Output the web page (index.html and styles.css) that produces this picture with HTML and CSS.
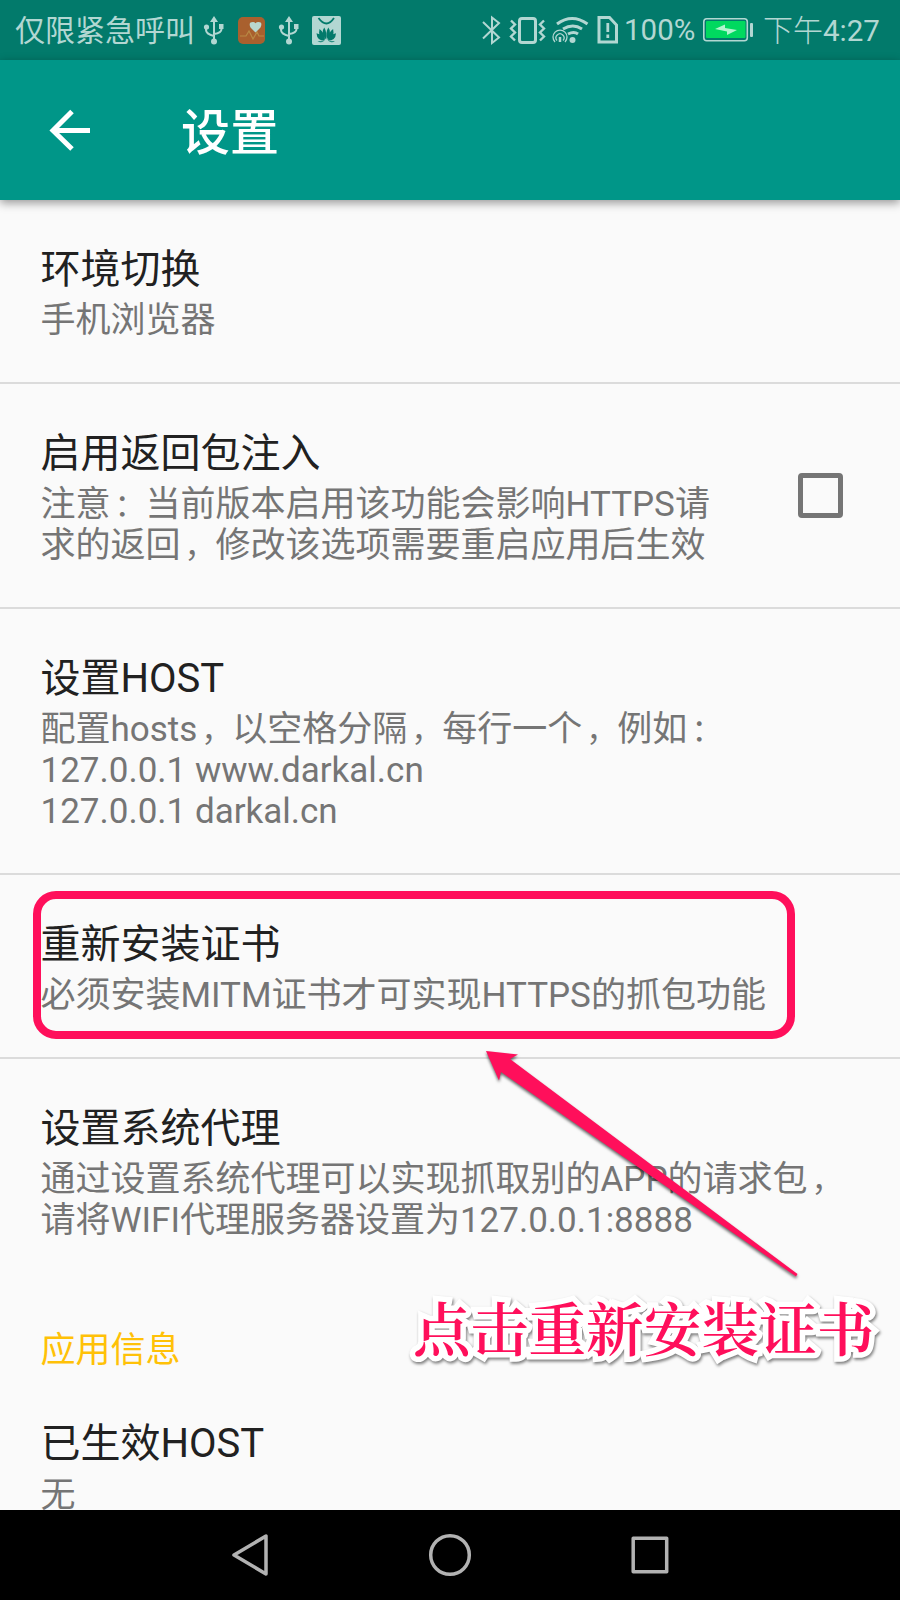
FILE: index.html
```html
<!DOCTYPE html>
<html lang="zh-CN">
<head>
<meta charset="utf-8">
<title>设置</title>
<link rel="stylesheet" href="styles.css">
</head>
<body>
<div class="screen">
  <header class="status">
    <span class="carrier">仅限紧急呼叫</span>
    <svg class="status-left" width="140" height="32" viewBox="202 14 140 32">
      <g class="usb">
        <path d="M214 20V40M206 27v3q0 4 8 6M221.500 27v2q0 4-7.500 5" fill="none" stroke="#b2d7d2" stroke-width="2"/>
        <path d="M210 22l4-6 4 6zM219 24h4.500v5h-4.500z"/><circle cx="206.500" cy="27" r="2.600"/><circle cx="214" cy="41.500" r="3"/>
      </g>
      <rect x="238" y="17" width="27" height="27" rx="5" fill="#a9602e"/>
      <path d="M240 36h6l3-5 4 8 4-7 2 4h5" fill="none" stroke="#b98a45" stroke-width="1.200"/>
      <path d="M255.500 32.500l-5-5q-2.500-5.500 2.500-5.500 1.500 0 2.500 1.200 1-1.200 3-1.200 4.500 0 2 5.500z" fill="#b9d8cf"/>
      <g class="usb" transform="translate(75 0)">
        <path d="M214 20V40M206 27v3q0 4 8 6M221.500 27v2q0 4-7.500 5" fill="none" stroke="#b2d7d2" stroke-width="2"/>
        <path d="M210 22l4-6 4 6zM219 24h4.500v5h-4.500z"/><circle cx="206.500" cy="27" r="2.600"/><circle cx="214" cy="41.500" r="3"/>
      </g>
      <rect x="312" y="16" width="29" height="29" rx="2" fill="#b2d7d2"/>
      <path d="M318.500 18q8 11 15.500 0" fill="none" stroke="#027a6b" stroke-width="1.800"/>
      <g fill="#027a6b">
        <path d="M325.800 39.500q-5.500-7-1.500-12 3 5 1.500 12z"/>
        <path d="M326.800 39.500q5.500-7 1.500-12-3 5-1.500 12z"/>
        <path d="M325 40q-7.500-3-5.500-11 5.500 4 5.500 11zM327.600 40q7.500-3 5.500-11-5.500 4-5.500 11zM324.500 40.700q-7.500 0-8-7.500 6.500 1.500 8 7.500zM328 40.700q7.500 0 8-7.500-6.500 1.500-8 7.500zM324 41.300h-6.500q3 2 6.500 0zM328.500 41.300h6.500q-3 2-6.500 0z"/>
      </g>
    </svg>
    <svg class="status-right" width="146" height="32" viewBox="480 14 146 32" fill="none" stroke="#b2d7d2" stroke-width="2">
      <path d="M483 22l16 15.500-7 5.500V17.500l7 5.500-16 15.500"/>
      <rect x="519.500" y="18.500" width="16" height="24" rx="2.500" stroke-width="3"/>
      <path d="M511 20.500l4 4-4 4 4 4-4 4 4 4M544 20.500l-4 4 4 4-4 4 4 4-4 4" stroke-width="2.400"/>
      <g stroke-width="3"><path d="M557 24q15-11 30.500 0M563 29q10-6 19 0M568 34q6-3 10 0"/></g>
      <circle cx="572.500" cy="40" r="3" fill="#b2d7d2" stroke="none"/>
      <g stroke-width="1.300"><path d="M555 42a7 7 0 1 1 10 0M557 40.500a4 4 0 1 1 6 0"/><path d="M560 37v5" stroke-width="2.500"/></g>
      <path d="M599 17.500h10.500l7 7.500v17H599z" stroke-width="3"/>
      <path d="M607.800 23v9M607.800 34.500v3.500" stroke-width="2.800"/>
    </svg>
    <span class="percent">100%</span>
    <svg class="battery" width="52" height="26" viewBox="702 17 52 26">
      <rect x="703.800" y="18.800" width="43.500" height="22" rx="3" fill="none" stroke="#b2d7d2" stroke-width="1.600"/>
      <rect x="706" y="21" width="39.500" height="17" rx="1" fill="#00d95f"/>
      <path d="M715 29l10-4.500v3.500l12 2-10 5v-3.500z" fill="#b2f4cf"/>
      <rect x="750" y="23" width="3" height="14" rx="1" fill="#b2d7d2"/>
    </svg>
    <span class="clock">下午<b>4:27</b></span>
  </header>
  <div class="toolbar">
    <svg width="42" height="42" viewBox="49 109 42 42" fill="none" stroke="#fff" stroke-width="5"><path d="M90 130.500H54M72 111.500l-19 19 19 18.500"/></svg>
    <h1 class="heading">设置</h1>
  </div>
  <main class="list">
    <section class="row">
      <h2 class="title">环境切换</h2>
      <p class="summary">手机浏览器</p>
    </section>
    <section class="row row-check">
      <div>
        <h2 class="title">启用返回包注入</h2>
        <p class="summary">注意<span class="mark">：</span>当前版本启用该功能会影响HTTPS请<br>求的返回<span class="mark">，</span>修改该选项需要重启应用后生效</p>
      </div>
      <span class="checkbox"></span>
    </section>
    <section class="row">
      <h2 class="title">设置HOST</h2>
      <p class="summary">配置hosts<span class="mark">，</span>以空格分隔<span class="mark">，</span>每行一个<span class="mark">，</span>例如<span class="mark">：</span><br>127.0.0.1 www.darkal.cn<br>127.0.0.1 darkal.cn</p>
    </section>
    <section class="row">
      <h2 class="title">重新安装证书</h2>
      <p class="summary">必须安装MITM证书才可实现HTTPS的抓包功能</p>
      <div class="highlight"></div>
    </section>
    <section class="row row-last">
      <h2 class="title">设置系统代理</h2>
      <p class="summary">通过设置系统代理可以实现抓取别的APP的请求包<span class="mark">，</span><br>请将WIFI代理服务器设置为127.0.0.1:8888</p>
    </section>
    <h3 class="category">应用信息</h3>
    <section class="row row-end">
      <h2 class="title">已生效HOST</h2>
      <p class="summary">无</p>
    </section>
  </main>
  <nav class="navbar">
    <svg width="900" height="90" viewBox="0 1510 900 90" fill="none" stroke="#b2b2b2" stroke-width="3.500" stroke-linejoin="round">
      <path d="M266 1536v38l-32-19z"/>
      <circle cx="450" cy="1555" r="19.300"/>
      <rect x="633.200" y="1538.200" width="33.500" height="33.500"/>
    </svg>
  </nav>
  <svg class="arrow" width="330" height="240" viewBox="480 1045 330 240">
    <path d="M486 1051l32 3.500-8 4.500 287.500 215-1.500 2.500-295-204.500-2 8.500z" fill="#ff0f5b"/>
  </svg>
  <div class="callout">点击重新安装证书</div>
</div>
</body>
</html>
```
FILE: styles.css
```css
* { box-sizing: border-box; }
body { margin: 0; background: #fafafa; font-family: Roboto, "Noto Sans CJK SC", sans-serif; }
h1, h2, h3, p { margin: 0; font-weight: 400; }
svg { display: block; flex: none; }
.screen { position: relative; width: 900px; height: 1600px; overflow: hidden; display: flex; flex-direction: column; background: #fafafa; white-space: nowrap; }
.status { flex: none; height: 60px; display: flex; align-items: center; padding-left: 15px; background: #027a6b; color: #b2d7d2; }
.status svg { fill: #b2d7d2; }
.status .status-right { fill: none; }
.carrier { width: 187px; padding-top: 2px; font-size: 30px; line-height: 60px; }
.status-right { margin-left: 138px; }
.percent { width: 76px; margin-left: -2px; padding-right: 2px; font-size: 29.500px; line-height: 58px; }
.battery { margin-left: 2px; }
.clock { margin-left: 9px; padding-top: 2px; font-size: 30px; font-weight: 300; line-height: 60px; }
.clock b { font-weight: 400; font-size: 29.500px; }
.toolbar { flex: none; height: 140px; display: flex; align-items: center; padding-left: 49px; gap: 90px; background: #009688; color: #fff; box-shadow: 0 3px 9px rgba(0, 0, 0, .4); position: relative; }
.heading { font-size: 49px; font-weight: 500; line-height: 70px; padding-top: 8px; }
.list { flex: 1; min-height: 0; overflow: hidden; }
.row { position: relative; padding: 45px 40px 41px 40.500px; border-bottom: 2px solid #dbdbdb; }
.row-last { border-bottom: 0; }
.row-check { display: flex; justify-content: space-between; align-items: center; padding-right: 57px; }
.title { height: 50px; font-size: 40px; line-height: 50px; color: #212121; }
.summary { margin-top: 5px; font-size: 35px; line-height: 41px; color: #757575; }
.mark { padding-left: 4px; font-size: 31px; line-height: 1; }
.row-end { padding-bottom: 0; border-bottom: 0; }
.row-end .summary { margin-top: 12px; line-height: 29px; }
.checkbox { width: 45px; height: 45px; margin-bottom: 4px; border: 5px solid #757575; border-radius: 4px; }
.category { height: 92px; padding: 45px 0 0 40.500px; font-size: 35px; line-height: 48px; color: #ffc107; }
.highlight { position: absolute; left: 33px; top: 16px; width: 762px; height: 148px; border: 8px solid #ff0f5b; border-radius: 23px; }
.navbar { flex: none; height: 90px; background: #000; }
.arrow { position: absolute; left: 480px; top: 1045px; filter: drop-shadow(0 2px 1.500px rgba(0, 0, 0, .6)); }
.callout { position: absolute; left: 413px; top: 1292px; font: 600 57.700px/70px "Noto Serif CJK SC", "Noto Serif SC", "Noto Sans CJK SC", serif; color: #ff0f5b; -webkit-text-stroke: 11px #fff; stroke-linejoin: round; paint-order: stroke fill; filter: drop-shadow(1px 2px 1.500px rgba(0, 0, 0, .5)); }
```
